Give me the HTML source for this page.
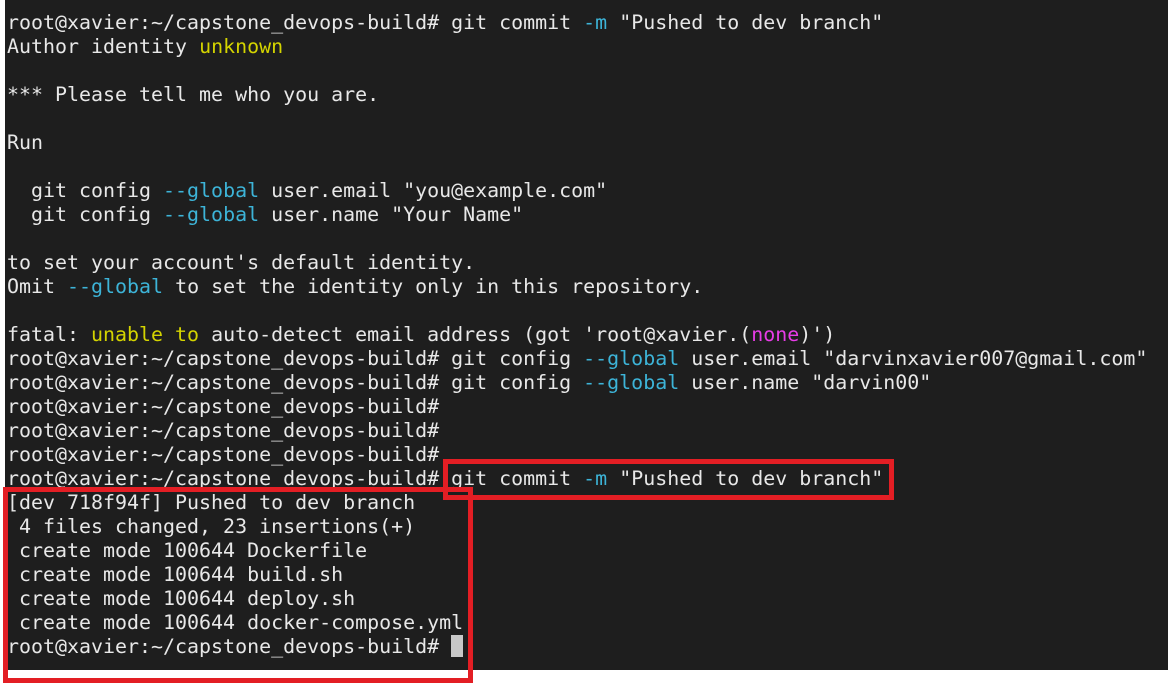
<!DOCTYPE html>
<html><head><meta charset="utf-8"><style>
html,body{margin:0;padding:0;background:#fff;width:1168px;height:684px;overflow:hidden}
.t{position:absolute;left:5px;top:0;width:1163px;height:670px;background:#1e1e1e}
pre{position:absolute;left:7px;top:10px;margin:0;font-family:"DejaVu Sans Mono","Liberation Mono",monospace;font-size:19.95px;line-height:24px;color:#e8e8e8;white-space:pre}
.c{color:#3db4d8}.y{color:#d4d400}.m{color:#e83ce8}
.cur{display:inline-block;width:12px;height:22px;background:#c8c8c8;vertical-align:-4px}
.b{position:absolute;border:5px solid #e31e24;box-sizing:border-box}
</style></head><body>
<div class="t"></div>
<pre>root@xavier:~/capstone_devops-build# git commit <span class="c">-m</span> "Pushed to dev branch"
Author identity <span class="y">unknown</span>

*** Please tell me who you are.

Run

  git config <span class="c">--global</span> user.email "you@example.com"
  git config <span class="c">--global</span> user.name "Your Name"

to set your account's default identity.
Omit <span class="c">--global</span> to set the identity only in this repository.

fatal: <span class="y">unable to</span> auto-detect email address (got 'root@xavier.(<span class="m">none</span>)')
root@xavier:~/capstone_devops-build# git config <span class="c">--global</span> user.email "darvinxavier007@gmail.com"
root@xavier:~/capstone_devops-build# git config <span class="c">--global</span> user.name "darvin00"
root@xavier:~/capstone_devops-build#
root@xavier:~/capstone_devops-build#
root@xavier:~/capstone_devops-build#
root@xavier:~/capstone_devops-build# git commit <span class="c">-m</span> "Pushed to dev branch"
[dev 718f94f] Pushed to dev branch
 4 files changed, 23 insertions(+)
 create mode 100644 Dockerfile
 create mode 100644 build.sh
 create mode 100644 deploy.sh
 create mode 100644 docker-compose.yml
root@xavier:~/capstone_devops-build# <span class="cur"></span></pre>
<div class="b" style="left:443px;top:459px;width:451px;height:41px"></div>
<div class="b" style="left:3px;top:487px;width:470px;height:196px"></div>
</body></html>
